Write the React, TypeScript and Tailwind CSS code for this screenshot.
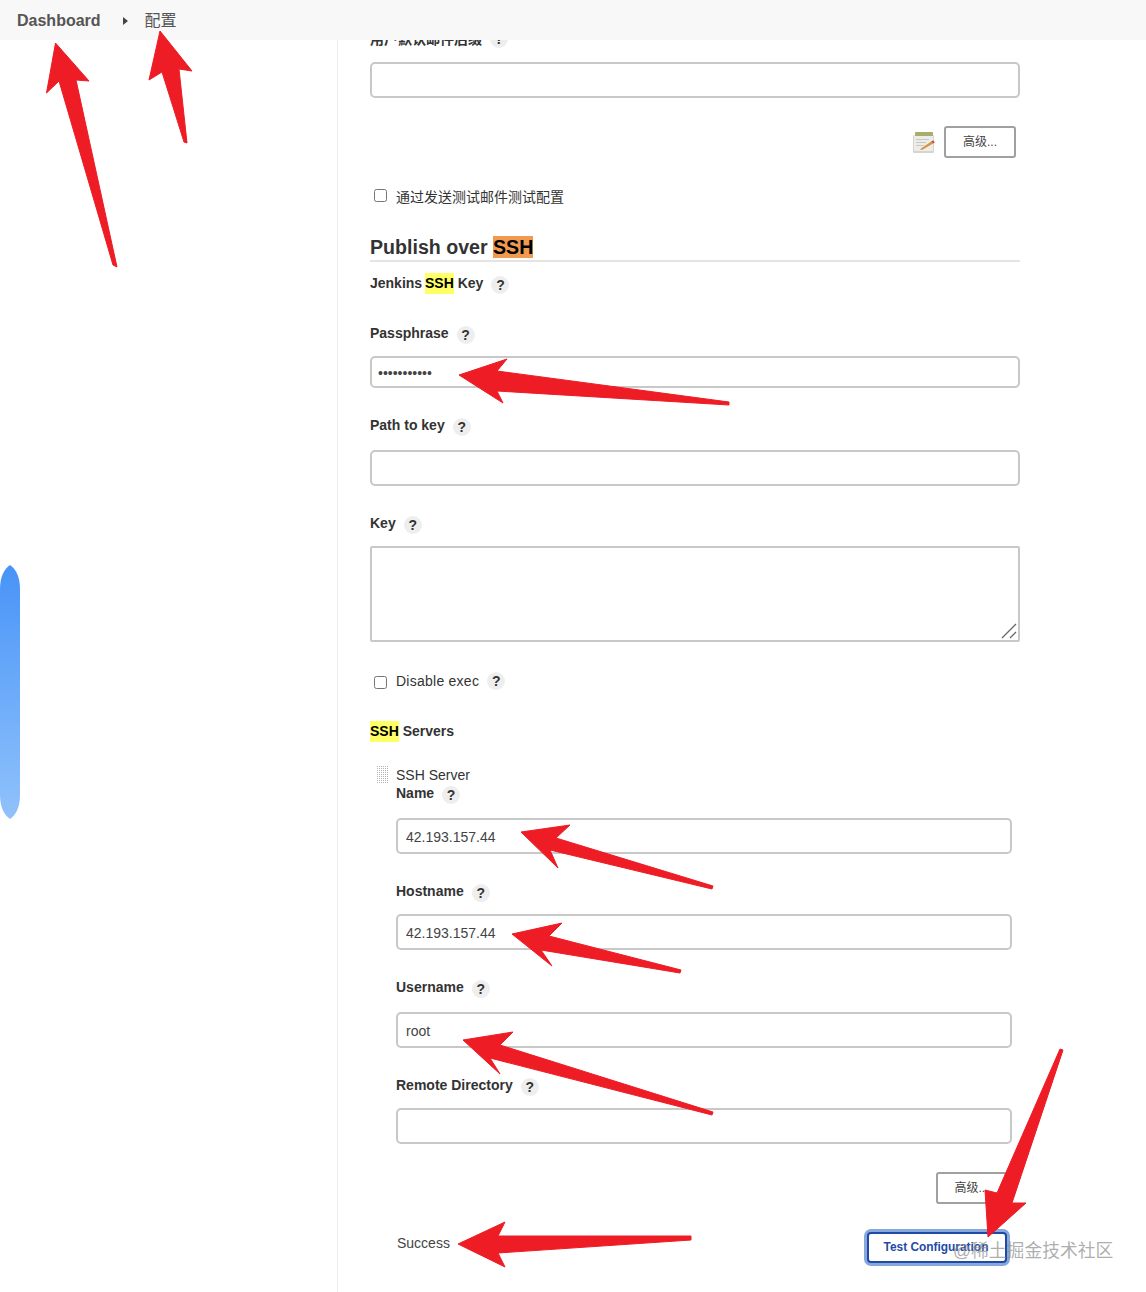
import type { ReactNode } from 'react'

const FONT = 'font-["Liberation_Sans","Noto_Sans_CJK_SC",sans-serif]'

const arrows = [
    '55.5,43 46.5,93 59,81 113,265 117,267 76,80 89,81',
    '160,31 149,80 162,72 184,142 187,143 179,69 192,71',
    '459,375 507,359 497,371 729,402 729,405 497,391 503,403',
    '521,832 570,825 556,838 713,886 712,889 550,850 558,868',
    '512,934 562,923 549,936 681,970 680,973 541,950 552,966',
    '463,1040 513,1032 500,1045 713,1112 712,1115 490,1058 500,1074',
    '458,1244 505,1222 498,1236 691,1236 691,1240 498,1253 505,1267',
    '1063,1050 1060,1049 997,1193 985,1190 988,1237 1026,1203 1012,1203',
]

function Help({ className = '' }: { className?: string }) {
    return (
        <span className={`ml-[8px] flex h-[18px] w-[18px] shrink-0 items-center justify-center rounded-full bg-[#eeeeee] text-[14px] font-bold text-[#333] ${className}`}>
            ?
        </span>
    )
}

function Label({ children, className = '' }: { children: ReactNode; className?: string }) {
    return (
        <div className={`flex h-5 items-center text-[14px] font-bold text-[#333] ${className}`}>
            <span className="flex -translate-y-px">{children}</span>
            <Help className="translate-y-px" />
        </div>
    )
}

function Mark({ children, className = '' }: { children: ReactNode; className?: string }) {
    return <span className={`bg-[#ffff66] text-black ${className}`}>{children}</span>
}

function Field({ value = '', className = '', type = 'text' }: { value?: string; className?: string; type?: string }) {
    return (
        <input
            readOnly
            type={type}
            value={value}
            className={`block w-full rounded-[5px] border-2 border-[#c8c8c8] bg-white px-2 pt-px text-[14px] text-[#444] outline-none ${className}`}
        />
    )
}

function AdvancedButton({ className = '' }: { className?: string }) {
    return (
        <button className={`h-8 rounded-[3px] border-2 border-[#a0a0a0] bg-white text-[12px] text-[#444] ${className}`}>
            高级...
        </button>
    )
}

function NotepadIcon() {
    return (
        <svg width="24" height="24" viewBox="0 0 24 24" className="mr-[8px]">
            <rect x="1" y="5" width="21" height="18" rx="1" fill="#d4d4d0" />
            <rect x="2" y="5" width="19" height="16" fill="#ecece8" />
            <rect x="3" y="2" width="18" height="4" rx="0.5" fill="#a9ad6c" />
            <path d="M4 9.5h13M4 12.5h10M4 15.5h8" stroke="#c9c9c4" strokeWidth="1" />
            <path d="M9 18.5 20 11l1.8 2-11 6.4-2.6.6z" fill="#d98f45" />
            <path d="M19.5 11.3 21 10.4l1.8 1.9-1.3 1z" fill="#b8433a" />
        </svg>
    )
}

function DragHandle() {
    const dots = []
    for (let r = 0; r < 9; r++) {
        for (let c = 0; c < 6; c++) {
            dots.push(<rect key={`${r}-${c}`} x={c * 2} y={r * 2} width="1" height="1" fill="#b4b4b4" />)
        }
    }
    return (
        <svg width="12" height="18" viewBox="0 0 12 18" className="mt-[1px]">
            {dots}
        </svg>
    )
}

export default function App() {
    return (
        <div className={`relative h-[1292px] w-[1146px] overflow-hidden bg-white ${FONT}`}>
            {/* breadcrumb */}
            <header className="relative z-10 flex h-10 items-center bg-[#f8f8f8] pt-px pl-[17px]">
                <span className="text-[16px] font-bold text-[#555]">Dashboard</span>
                <svg width="5" height="8" viewBox="0 0 5 8" className="ml-[22px] text-[#444]">
                    <path d="M0 0l5 4-5 4z" fill="currentColor" />
                </svg>
                <span className="ml-[17px] text-[16px] text-[#555]">配置</span>
            </header>

            <div className="flex">
                <aside className="h-[1252px] w-[338px] shrink-0 border-r border-[#eeeeee]" />

                <main className="ml-[32px] w-[650px] text-[#333]">
                    <div className="-mt-[11px] flex h-5 items-center text-[14px] font-bold">
                        用户默认邮件后缀
                        <Help />
                    </div>
                    <Field className="mt-[13px] h-9" />

                    <div className="mt-7 flex items-center justify-end pr-1">
                        <NotepadIcon />
                        <AdvancedButton className="w-[72px]" />
                    </div>

                    <label className="mt-[29px] flex h-5 items-center text-[14px]">
                        <input type="checkbox" className="ml-1 h-[13px] w-[13px] -translate-y-0.5" />
                        <span className="ml-[9px]">通过发送测试邮件测试配置</span>
                    </label>

                    <h2 className="mt-7 h-[27px] border-b-2 border-[#e4e4e4] text-[19.6px] leading-[25px] font-bold">
                        Publish over <span className="bg-[#f0994f] text-black">SSH</span>
                    </h2>

                    <Label className="mt-3">
                        Jenkins&nbsp;<Mark className="-ml-px">SSH</Mark>&nbsp;Key
                    </Label>

                    <Label className="mt-[30px]">Passphrase</Label>
                    <Field type="password" value="12345678901" className="mt-3 h-8 !px-[6px] text-[13px]" />

                    <Label className="mt-7">Path to key</Label>
                    <Field className="mt-[14px] h-9" />

                    <Label className="mt-7">Key</Label>
                    <div className="relative mt-3">
                        <textarea
                            readOnly
                            className="block h-24 w-full resize-none rounded-[2px] border-2 border-[#c8c8c8] outline-none"
                        />
                        {/* resize grip */}
                        <svg width="16" height="16" viewBox="0 0 16 16" className="absolute right-[3px] bottom-[3px]">
                            <path d="M1 15 15 1M9 15l6-6" stroke="#666" strokeWidth="1.3" fill="none" />
                        </svg>
                    </div>

                    <label className="mt-[29px] flex h-5 items-center text-[14px]">
                        <input type="checkbox" className="ml-1 h-[13px] w-[13px] translate-y-px" />
                        <span className="ml-[9px] tracking-[0.25px]">Disable exec</span>
                        <Help />
                    </label>

                    <div className="mt-[30px] flex h-5 items-center text-[14px] font-bold">
                        <Mark>SSH</Mark>&nbsp;Servers
                    </div>

                    <div className="mt-6 flex">
                        <div className="w-[26px] shrink-0 pl-[7px]">
                            <DragHandle />
                        </div>
                        <div className="w-[616px]">
                            <div className="h-[19px] text-[14px] leading-5">SSH Server</div>
                            <Label>Name</Label>
                            <Field value="42.193.157.44" className="mt-[14px] h-9" />

                            <Label className="mt-7">Hostname</Label>
                            <Field value="42.193.157.44" className="mt-3 h-9" />

                            <Label className="mt-7">Username</Label>
                            <Field value="root" className="mt-[14px] h-9" />

                            <Label className="mt-7">Remote Directory</Label>
                            <Field className="mt-3 h-9" />

                            <div className="mt-7 flex justify-end pr-[5px]">
                                <AdvancedButton className="w-[71px]" />
                            </div>

                            <div className="mt-[26px] flex h-[37px] items-center justify-between">
                                <span className="mb-[10px] ml-px text-[14px] text-[#444]">Success</span>
                                <button className="mr-[5px] mb-[2px] h-[31px] w-[140px] rounded-[4px] border-2 border-[#1f4aa6] bg-white pr-[2px] text-[11.9px] font-bold text-[#1f4aa6] shadow-[0_0_0_3px_#86a8da]">
                                    Test Configuration
                                </button>
                            </div>
                        </div>
                    </div>
                </main>
            </div>

            {/* scroll hint on the left edge */}
            <div className="absolute top-[565px] left-0 h-[254px] w-5 bg-linear-to-b from-[#4793f7] to-[#90c2fb] [clip-path:path('M10_0C16_4_20_12_20_24V230C20_242_16_250_10_254C4_250_0_242_0_230V24C0_12_4_4_10_0Z')]" />

            {/* annotation arrows */}
            <svg className="pointer-events-none absolute inset-0 z-20" width="1146" height="1292" viewBox="0 0 1146 1292">
                {arrows.map((points) => (
                    <polygon key={points} points={points} fill="#ee1c25" stroke="#ee1c25" strokeWidth="1" strokeLinejoin="round" />
                ))}
            </svg>

            {/* watermark */}
            <div className="absolute top-[1238px] left-[953px] z-30 text-[17.8px] whitespace-nowrap text-[#8a8a8a]/70">
                @稀土掘金技术社区
            </div>
        </div>
    )
}
